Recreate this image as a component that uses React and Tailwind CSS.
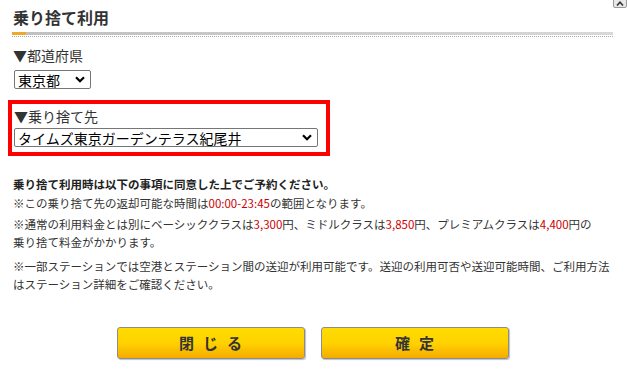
import React from "react";

const jp = { fontFamily: '"Noto Sans CJK JP", "Noto Sans", sans-serif' };

const Red = ({ children }) => <span className="text-[#cc0000]">{children}</span>;

const Chevron = () => (
  <svg width="10" height="7" viewBox="0 0 10 7" className="shrink-0">
    <path d="M1 1.2 L5 5.2 L9 1.2" fill="none" stroke="#000" strokeWidth="2.2" />
  </svg>
);

const Select = ({ value, className }) => (
  <div
    className={`flex items-center justify-between h-[19px] border border-[#767676] rounded-[2px] bg-white pl-[3px] pr-[5px] text-[14px] leading-none text-black ${className}`}
  >
    <span>{value}</span>
    <Chevron />
  </div>
);

const YellowButton = ({ label }) => (
  <button
    className="w-[188px] h-[32px] rounded-[3px] border border-[#8c8c8c] bg-gradient-to-b from-[#ffdc00] via-[#ffd200] to-[#f5ab00] shadow-[1px_1px_1px_rgba(0,0,0,0.25)] text-[15px] font-bold tracking-[0.6em] text-[#333] flex items-center justify-center pl-[0.6em]"
    style={jp}
  >
    {label}
  </button>
);

export default function App() {
  return (
    <div className="relative w-[627px] h-[376px] bg-white overflow-hidden text-[#333]" style={jp}>
      {/* corner close button, mostly scrolled out of view */}
      <div className="absolute right-0 top-[-6px] w-[14px] h-[14px] border border-[#999] bg-[#e8e8e8] rounded-[2px] flex items-end justify-center pb-[1px]">
        <svg width="8" height="5" viewBox="0 0 8 5">
          <path d="M1 4.5 L4 1.2 L7 4.5" fill="none" stroke="#333" strokeWidth="1.6" />
        </svg>
      </div>
      <div className="px-[12px] pt-[5px]">
        <h1 className="text-[16px] font-bold leading-[24px] pl-[1px]">乗り捨て利用</h1>
        <div className="mt-[3px] w-[601px]">
          <div className="flex h-[3px]">
            <div className="w-[14px] bg-[#f0a82a]" />
            <div className="flex-1 bg-gradient-to-r from-[#c0c0c0] to-[#d8d8d8]" />
          </div>
          <div className="mt-[1px] border-t border-dotted border-[#aaa]" />
        </div>

        <div className="mt-[8px] pl-[1px] text-[14px] leading-[20px]">▼都道府県</div>
        <Select value="東京都" className="mt-[5px] ml-[2px] w-[77px] gap-[6px]" />

        <div className="mt-[11px] ml-[-4px] w-[322px] border-[4px] border-[#ff0000] px-[2px] pt-[2px] pb-[5px]">
          <div className="text-[14px] leading-[20px]">▼乗り捨て先</div>
          <Select value="タイムズ東京ガーデンテラス紀尾井" className="mt-[2px] w-[304px]" />
        </div>

        <div className="mt-[19px] pl-[1px] text-[11.5px] leading-[18px] whitespace-nowrap">
          <p className="font-bold text-[#222]">乗り捨て利用時は以下の事項に同意した上でご予約ください。</p>
          <p className="mt-[1px]">
            ※この乗り捨て先の返却可能な時間は<Red>00:00-23:45</Red>の範囲となります。
          </p>
          <p className="mt-[3px]">
            ※通常の利用料金とは別にベーシッククラスは<Red>3,300</Red>円、ミドルクラスは<Red>3,850</Red>円、プレミアムクラスは<Red>4,400</Red>円の
            <br />
            乗り捨て料金がかかります。
          </p>
          <p className="mt-[6px]">
            ※一部ステーションでは空港とステーション間の送迎が利用可能です。送迎の利用可否や送迎可能時間、ご利用方法
            <br />
            はステーション詳細をご確認ください。
          </p>
        </div>

        <div className="mt-[34px] flex justify-center gap-[16px] pr-[2px]">
          <YellowButton label="閉じる" />
          <YellowButton label="確定" />
        </div>
      </div>
    </div>
  );
}
